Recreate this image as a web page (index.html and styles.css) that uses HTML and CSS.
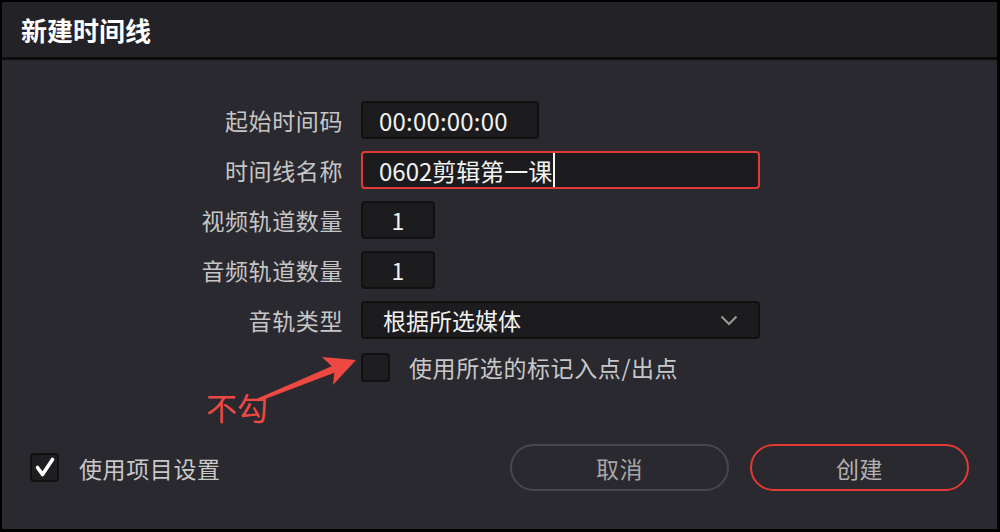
FILE: index.html
```html
<!DOCTYPE html>
<html lang="zh-CN">
<head>
<meta charset="utf-8">
<title>新建时间线</title>
<link rel="stylesheet" href="styles.css">
</head>
<body>
<div class="dialog">
  <header class="title-bar"><h1>新建时间线</h1></header>
  <main class="body">
    <div class="form">
      <div class="lbl">起始时间码</div>
      <div class="field tc">00:00:00:00</div>
      <div class="lbl">时间线名称</div>
      <div class="field wide active">0602剪辑第一课<span class="caret"></span></div>
      <div class="lbl">视频轨道数量</div>
      <div class="field num">1</div>
      <div class="lbl">音频轨道数量</div>
      <div class="field num">1</div>
      <div class="lbl">音轨类型</div>
      <div class="field wide select"><span>根据所选媒体</span>
        <svg class="chev" width="18" height="11" viewBox="0 0 18 11"><path d="M1.5 1.5 L9 9 L16.5 1.5" fill="none" stroke="#9a9a9a" stroke-width="2"/></svg>
      </div>
      <div class="spacer"></div>
      <div class="check-row"><span class="cb"></span><span class="opt">使用所选的标记入点/出点</span></div>
    </div>
    <footer class="footer">
      <div class="use-proj">
        <span class="cb checked"><svg width="25" height="25" viewBox="0 0 25 25"><path d="M5.5 12.5 L10.5 19.5 L20.5 4.5" fill="none" stroke="#fff" stroke-width="3.6" stroke-linecap="round" stroke-linejoin="round"/></svg></span>
        <span class="opt">使用项目设置</span>
      </div>
      <div class="buttons">
        <button class="btn">取消</button>
        <button class="btn primary">创建</button>
      </div>
    </footer>
  </main>
  <div class="annotation">
    <svg class="arrow" width="112" height="55" viewBox="0 0 112 55"><polygon points="7.4,48.6 81.7,16.3 72,7 106,10 83,35 84.3,22.7 8.6,51.4" fill="#ee4843"/></svg>
    <span class="note">不勾</span>
  </div>
</div>
</body>
</html>
```

FILE: styles.css
```css
html, body {
  margin: 0;
  padding: 0;
  background: #000;
}
body {
  font-family: "Noto Sans CJK SC", "Noto Sans", sans-serif;
}
.dialog {
  width: 1000px;
  height: 532px;
  box-sizing: border-box;
  border: 2px solid #000;
  border-right-width: 3px;
  border-bottom-width: 3px;
  background: #29292f;
  display: flex;
  flex-direction: column;
  position: relative;
}
.title-bar {
  height: 55px;
  flex: none;
  background: #222227;
  border-bottom: 3px solid #0c0c0d;
  display: flex;
  align-items: center;
  padding-left: 19px;
}
.title-bar h1 {
  margin: 0;
  font-size: 26px;
  font-weight: 700;
  color: #fff;
  line-height: 1;
}
.body {
  flex: 1;
  display: flex;
  flex-direction: column;
  padding-top: 41px;
}
.form {
  display: grid;
  grid-template-columns: 341px 399px;
  column-gap: 18px;
  row-gap: 12px;
  grid-auto-rows: 38px;
}
.lbl {
  text-align: right;
  color: #c6c6c6;
  font-size: 23px;
  letter-spacing: 0.6px;
  line-height: 38px;
  white-space: nowrap;
}
.field {
  box-sizing: border-box;
  height: 38px;
  background: #1c1c1e;
  border: 2px solid #111112;
  border-radius: 4px;
  color: #f2f2f2;
  font-size: 23px;
  display: flex;
  align-items: center;
  padding-left: 16px;
  white-space: nowrap;
}
.field.tc {
  width: 178px;
  font-size: 24px;
  letter-spacing: 0.2px;
}
.field.wide { width: 399px; }
.field.active {
  border-color: #e43a35;
  font-size: 24px;
}
.field.num {
  width: 74px;
  padding-left: 0;
  justify-content: center;
}
.caret {
  display: inline-block;
  width: 1.5px;
  height: 34px;
  background: #f4f4f4;
  margin-left: 1px;
}
.field.select {
  justify-content: space-between;
  padding-left: 20px;
  padding-right: 20px;
}
.chev { display: block; }
.check-row {
  display: flex;
  align-items: center;
  gap: 19px;
  margin-top: 1px;
  height: 30px;
}
.cb {
  box-sizing: border-box;
  width: 29px;
  height: 29px;
  background: #1e1e20;
  border: 2px solid #111112;
  border-radius: 4px;
  display: flex;
  align-items: center;
  justify-content: center;
  flex: none;
}
.opt {
  color: #c8c8c8;
  font-size: 23px;
  letter-spacing: 0.6px;
  white-space: nowrap;
}
.footer {
  margin-top: auto;
  display: flex;
  align-items: center;
  padding: 0 28px 38px 28px;
}
.use-proj {
  display: flex;
  align-items: center;
  gap: 20px;
}
.buttons {
  margin-left: auto;
  display: flex;
  gap: 21px;
}
.btn {
  width: 219px;
  height: 47px;
  box-sizing: border-box;
  border: 2px solid #45484d;
  border-radius: 24px;
  background: transparent;
  color: #a6a6a6;
  font-family: inherit;
  font-size: 23px;
  letter-spacing: 0.6px;
  padding: 0;
}
.btn.primary {
  border-color: #e53935;
  color: #b2b2b2;
}
.annotation .arrow {
  position: absolute;
  left: 248px;
  top: 348px;
}
.annotation .note {
  position: absolute;
  left: 204px;
  top: 386px;
  color: #ee4843;
  font-size: 31px;
  line-height: 1.2;
}
```
